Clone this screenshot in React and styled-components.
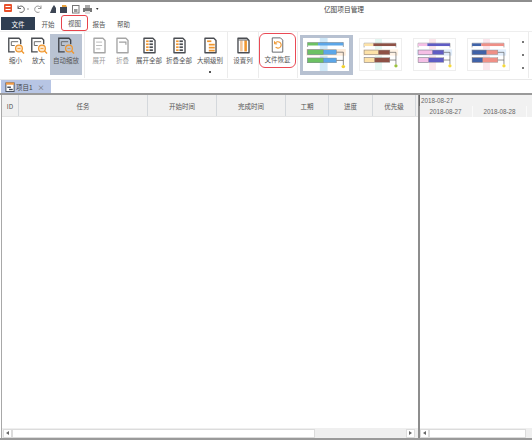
import React from "react";
import styled, { createGlobalStyle } from "styled-components";

const Global = createGlobalStyle`
html, body { margin:0; padding:0; background:#fff; }
body { font-family:"Noto Sans CJK SC","Liberation Sans",sans-serif; color:#555; }
`;

const Page = styled.div`
width:532px;
height:440px;
display:flex;
flex-direction:column;
overflow:hidden;
border-top:2px solid #8e8e8e;
box-sizing:border-box;
`;

const TitleBar = styled.div`
height:14px;
display:flex;
align-items:center;
position:relative;
`;

const Title = styled.div`
position:absolute;
left:0;
right:0;
top:0;
text-align:center;
font-size:6.7px;
line-height:14px;
color:#444;
padding-left:156px;
box-sizing:border-box;
`;

const MenuBar = styled.div`
height:15px;
display:flex;
align-items:flex-start;
padding-left:1px;
`;

const FileTab = styled.div`
width:34px;
background:#2f3e52;
color:#fff;
font-size:6.5px;
display:flex;
align-items:center;
justify-content:center;
height:13px;
margin-top:1px;
`;

const MenuTab = styled.div`
width:${(p) => p.$w || 26}px;
font-size:6.5px;
display:flex;
align-items:center;
justify-content:center;
color:#555;
box-sizing:border-box;
height:${(p) => (p.$ring ? 16 : 14)}px;
margin-top:${(p) => (p.$ring ? -1 : 1)}px;
border:${(p) => (p.$ring ? "1px solid #e8434b" : "none")};
border-radius:3px;
margin-left:${(p) => p.$ml || 0}px;
background:#fff;
`;

const Ribbon = styled.div`
height:49px;
display:flex;
align-items:flex-start;
border-top:1px solid #eeeeee;
border-bottom:1px solid #e9e9e9;
box-sizing:border-box;
padding-left:4px;
`;

const ToolButton = styled.div`
width:${(p) => p.$w}px;
height:${(p) => (p.$ring ? 35 : 41)}px;
margin-top:${(p) => (p.$ring ? 1 : 2)}px;
display:flex;
flex-direction:column;
align-items:center;
flex-shrink:0;
box-sizing:border-box;
padding-top:3px;
background:${(p) => (p.$active ? "#b9c3d3" : "transparent")};
border:${(p) => (p.$ring ? "1px solid #ea4a55" : "none")};
border-radius:${(p) => (p.$ring ? "6px" : "0")};
font-size:6.5px;
line-height:10px;
color:${(p) => (p.$off ? "#999" : "#555")};
white-space:nowrap;
position:relative;
`;

const ToolLabel = styled.span`
margin-top:1px;
`;

const Caret = styled.span`
position:absolute;
bottom:2px;
left:50%;
margin-left:-1px;
width:2px;
height:2px;
background:#555;
`;

const Sep = styled.div`
width:1px;
height:46px;
background:#ececec;
flex-shrink:0;
margin:${(p) => p.$m || "0 2px"};
`;

const Gallery = styled.div`
display:flex;
align-items:flex-start;
margin-top:3px;
`;

const Thumb = styled.div`
width:${(p) => (p.$sel ? 53 : 43)}px;
height:${(p) => (p.$sel ? 40 : 33)}px;
margin:${(p) => (p.$sel ? "0 6px 0 0" : "3px 11px 0 0")};
box-sizing:border-box;
border:${(p) => (p.$sel ? "solid #b7c1d1" : "1px solid #eeeeee")};
border-width:${(p) => (p.$sel ? "3px 4px 4px 3px" : "1px")};
display:flex;
flex-shrink:0;
`;

const GalleryDots = styled.div`
width:6px;
height:28px;
margin:6px 0 0 -1px;
display:flex;
flex-direction:column;
justify-content:space-between;
align-items:center;
`;

const Dot = styled.span`
width:2px;
height:2px;
background:#777;
`;

const TabRow = styled.div`
height:13px;
display:flex;
padding-left:1px;
`;

const DocTab = styled.div`
width:50px;
height:13px;
background:#b7c5e4;
display:flex;
align-items:center;
padding-left:4px;
gap:1px;
box-sizing:border-box;
font-size:6.5px;
color:#444;
`;

const Close = styled.span`
margin-left:4px;
font-size:7px;
color:#666;
`;

const Panels = styled.div`
flex:1;
display:flex;
min-height:0;
border-top:2px solid #9a9a9a;
border-bottom:2px solid #9a9a9a;
`;

const LeftPanel = styled.div`
width:417px;
margin-left:1px;
border-left:1px solid #a8a8a8;
display:flex;
flex-direction:column;
box-sizing:border-box;
`;

const HeadRow = styled.div`
height:22px;
display:flex;
background:#f0f0f0;
border-bottom:1px solid #e3e3e3;
box-sizing:border-box;
`;

const HeadCell = styled.div`
width:${(p) => p.$w}px;
flex-shrink:0;
font-size:6.5px;
display:flex;
align-items:center;
justify-content:center;
border-right:1px solid #d4d8dc;
box-sizing:border-box;
color:#555;
`;

const Body = styled.div`
flex:1;
background:#fff;
`;

const ScrollRow = styled.div`
height:10px;
display:flex;
align-items:center;
background:#efefef;
padding-left:${(p) => p.$pl || 0}px;
`;

const ScrollBtn = styled.div`
width:9px;
height:9px;
background:#fff;
border:1px solid #dcdcdc;
box-sizing:border-box;
display:flex;
align-items:center;
justify-content:center;
margin-left:${(p) => (p.$auto ? "auto" : "0")};
margin-right:${(p) => p.$mr || 0}px;
flex-shrink:0;
`;

const Arrow = styled.span`
width:0;
height:0;
border-top:2px solid transparent;
border-bottom:2px solid transparent;
border-${(p) => (p.$right ? "left" : "right")}:3px solid #666;
`;

const Thumbbar = styled.div`
width:${(p) => p.$w}px;
height:9px;
background:#fff;
border:1px solid #dcdcdc;
box-sizing:border-box;
`;

const Splitter = styled.div`
width:2px;
background:#8d8d8d;
flex-shrink:0;
`;

const RightPanel = styled.div`
flex:1;
display:flex;
flex-direction:column;
min-width:0;
`;

const GanttHead = styled.div`
height:22px;
background:#f1f1f1;
display:flex;
flex-direction:column;
font-size:6.3px;
line-height:11px;
color:#666;
font-family:"Liberation Sans",sans-serif;
`;

const GanttMonth = styled.div`
height:11px;
border-left:1px solid #666;
margin-left:-1px;
padding-left:1px;
position:relative;
`;

const GanttDays = styled.div`
height:11px;
display:flex;
margin-left:-1px;
`;

const GanttDay = styled.div`
width:54px;
text-align:center;
border-right:1px solid #fafafa;
box-sizing:border-box;
flex-shrink:0;
`;

const dark = "#4a4d52";
const org = "#f0962e";

// ribbon icons share one page shape, 20 units drawn at 17px
const Doc = ({ children, faded }) => (
  <svg width="17" height="17" viewBox="0 0 20 20" fill="none">
    <path
      d="M3.5 1.5h10.5l2.5 2.5v14.5h-13z"
      fill="#fff"
      stroke={faded ? "#a5a5a5" : dark}
      strokeWidth="1.6"
      strokeLinejoin="round"
    />
    {children}
  </svg>
);

const MagnifyIcon = ({ active }) => (
  <svg width="18" height="17" viewBox="0 0 21 20" fill="none">
    <path d="M9 17.5H2V1.5h12l2 2v5" stroke={active ? "#3f434a" : dark} strokeWidth="1.6" />
    <path d="M5 5.5h8M5 5.5v4.5h4" stroke="#666" strokeWidth="1.1" />
    <circle cx="14" cy="13.5" r="4" fill={active ? "none" : "#fde6c8"} stroke={org} strokeWidth="1.4" />
    <path d="M17 16.5l3 3" stroke={org} strokeWidth="1.5" />
    <path d="M12.3 13.5h3.4" stroke={org} strokeWidth="1" />
  </svg>
);

const OutlineIcon = ({ rows }) => (
  <Doc>
    {rows.map(([x, y, w, c]) => (
      <rect key={`${x}-${y}`} x={x} y={y} width={w} height="2" fill={c} />
    ))}
  </Doc>
);

const RestoreIcon = () => (
  <svg width="15" height="16" viewBox="0 0 20 21" fill="none">
    <path d="M3 1h11l3 3v16H3z" fill="#fff" stroke="#5a5d62" strokeWidth="1.2" />
    <path d="M6.8 8.4a4.3 4.3 0 1 1 .7 5" stroke={org} strokeWidth="1.5" />
    <path d="M6 5.5v3.5h3.5" stroke={org} strokeWidth="1.3" />
  </svg>
);

const ColumnsIcon = () => (
  <Doc>
    <rect x="6" y="4" width="3" height="13" fill="#f3c69a" />
    <rect x="11" y="4" width="3" height="13" fill={org} />
    <path d="M4 3.5h12" stroke={dark} />
  </Doc>
);

const QuickBar = () => (
  <svg width="100" height="14" viewBox="0 0 100 14" fill="none">
    <rect x="4" y="2" width="8" height="8" rx="1" fill="#e8502a" />
    <path d="M5.5 4.5h5M5.5 7.5h5" stroke="#fff" strokeWidth="1" />
    <path d="M18 6.5a3.2 3.2 0 1 1 1.5 3.5M18 3.5v3h3" stroke="#666" strokeWidth="1" />
    <path d="M27 7h2" stroke="#999" />
    <path d="M41 6.5a3.2 3.2 0 1 0-1.5 3.5M41 3.5v3h-3" stroke="#999" strokeWidth="1" />
    <path d="M50 11l2-5 2-3 2 3v5z" fill="#3d4654" />
    <path d="M60 5h7v6h-7z" fill="#3d4654" />
    <path d="M62 3h4l1 2h-5z" fill="#e9a33f" />
    <rect x="72.5" y="3.5" width="6.5" height="7.5" stroke="#777" />
    <rect x="74" y="7" width="3.5" height="3" fill="#999" />
    <rect x="83" y="6" width="9" height="4" fill="#777" />
    <rect x="85" y="3" width="5" height="3" fill="#aaa" />
    <rect x="85" y="9" width="5" height="3" fill="#ddd" />
    <path d="M96 6h2.5l-1.2 2z" fill="#333" />
  </svg>
);

const GanttThumb = ({ pre, post, band, stripe, dot, mid1, mid2, top }) => (
  <svg width="100%" height="100%" viewBox="0 0 43 33" preserveAspectRatio="none">
    <rect x="15.7" y="0" width="7.3" height="33" fill={stripe} />
    <rect x="3" y="11" width="37" height="6.7" fill={band} />
    <path d="M4.3 9V4.5h33.4V9" stroke="#555" strokeWidth="0.5" fill="none" />
    <rect x="4.3" y="4.7" width={top - 4.3} height="2.8" fill={pre} />
    <rect x={top} y="4.7" width={37.7 - top} height="2.8" fill={post} />
    <rect x="4.3" y="11.8" width="27" height="4.8" fill={post} stroke="#888" strokeWidth="0.4" />
    <rect x="4.3" y="11.8" width={mid1 - 4.3} height="4.8" fill={pre} stroke="#888" strokeWidth="0.4" />
    <rect x="4.3" y="20" width="27" height="4.8" fill={post} stroke="#888" strokeWidth="0.4" />
    <rect x="4.3" y="20" width={mid2 - 4.3} height="4.8" fill={pre} stroke="#888" strokeWidth="0.4" />
    <path d="M31.3 14.2h6.4v13M31.3 22.4h6.4" stroke="#444" strokeWidth="0.6" fill="none" />
    <circle cx="37.7" cy="28.6" r="1.7" fill={dot} />
  </svg>
);

const thumbs = [
  { pre: "#fde2a8", post: "#8e5145", band: "#fff3e6", stripe: "#e4f7f2", dot: "#9ac23c", top: 14, mid1: 19.3, mid2: 15.3 },
  { pre: "#f5bfe6", post: "#5f5cc4", band: "#e1edfb", stripe: "#fbe6ec", dot: "#f6d93a", top: 14, mid1: 19.3, mid2: 15.3 },
  { pre: "#3f62a8", post: "#ef8f86", band: "#e1edfb", stripe: "#fbe6ec", dot: "#f6d93a", top: 14, mid1: 19.3, mid2: 15.3 },
];

const columns = [
  ["ID", 17],
  ["任务", 129],
  ["开始时间", 69],
  ["完成时间", 69],
  ["工期", 43],
  ["进度", 44],
  ["优先级", 43],
];

const allRows = [
  [6, 4, 3, org], [10, 4, 4, dark],
  [6, 7.5, 3, org], [10, 7.5, 4, dark],
  [6, 11, 3, org], [10, 11, 4, dark],
  [6, 14.5, 3, org], [10, 14.5, 4, dark],
];

const App = () => {
  return (
    <Page>
      <Global />
      <TitleBar>
        <QuickBar />
        <Title>亿图项目管理</Title>
      </TitleBar>

      <MenuBar>
        <FileTab>文件</FileTab>
        <MenuTab $w={26}>开始</MenuTab>
        <MenuTab $w={27} $ring>视图</MenuTab>
        <MenuTab $w={20} $ml={1}>报告</MenuTab>
        <MenuTab $w={29}>帮助</MenuTab>
      </MenuBar>

      <Ribbon>
        <ToolButton $w={23}><MagnifyIcon /><ToolLabel>缩小</ToolLabel></ToolButton>
        <ToolButton $w={23}><MagnifyIcon /><ToolLabel>放大</ToolLabel></ToolButton>
        <ToolButton $w={32} $active><MagnifyIcon active /><ToolLabel>自动缩放</ToolLabel></ToolButton>
        <Sep $m="0 2px" />
        <ToolButton $w={24} $off>
          <Doc faded><path d="M6 6h7M6 10h7M6 14h5" stroke="#b0b0b0" /></Doc>
          <ToolLabel>展开</ToolLabel>
        </ToolButton>
        <ToolButton $w={23} $off>
          <Doc faded><path d="M6 6h8v3" stroke="#a0a0a0" strokeWidth="1.4" /></Doc>
          <ToolLabel>折叠</ToolLabel>
        </ToolButton>
        <ToolButton $w={30}>
          <OutlineIcon rows={allRows} />
          <ToolLabel>展开全部</ToolLabel>
        </ToolButton>
        <ToolButton $w={30}>
          <OutlineIcon rows={allRows} />
          <ToolLabel>折叠全部</ToolLabel>
        </ToolButton>
        <ToolButton $w={32}>
          <OutlineIcon rows={[[6, 4, 5, org], [8, 8, 7, org], [8, 11.5, 7, org], [8, 15, 7, org]]} />
          <ToolLabel>大纲级别</ToolLabel>
          <Caret />
        </ToolButton>
        <Sep $m="0 1px" />
        <ToolButton $w={28}><ColumnsIcon /><ToolLabel>设置列</ToolLabel></ToolButton>
        <Sep $m="0 0 0 1px" />
        <ToolButton $w={37} $ring><RestoreIcon /><ToolLabel>文件恢复</ToolLabel></ToolButton>
        <Sep $m="0 2px 0 1px" />
        <Gallery>
          <Thumb $sel>
            <GanttThumb pre="#6cc163" post="#5ba6e8" band="#fdebd9" stripe="#cfe8f8" dot="#f2d22e" top={14} mid1={19} mid2={19} />
          </Thumb>
          {thumbs.map((t) => (
            <Thumb key={t.pre}><GanttThumb {...t} /></Thumb>
          ))}
          <GalleryDots><Dot /><Dot /><Dot /></GalleryDots>
        </Gallery>
        <Sep $m="0 0 0 2px" />
      </Ribbon>

      <TabRow>
        <DocTab>
          <svg width="10" height="10" viewBox="0 0 10 11">
            <rect x="0.5" y="1" width="9" height="9.5" fill="#fff" stroke="#3d4654" />
            <rect x="0.5" y="0.5" width="9" height="2.5" fill="#ef9a45" />
            <rect x="2" y="5" width="4" height="1.5" fill="#3d4654" />
            <rect x="4" y="7.5" width="4" height="1.5" fill="#3d4654" />
          </svg>
          项目1
          <Close>×</Close>
        </DocTab>
      </TabRow>

      <Panels>
        <LeftPanel>
          <HeadRow>
            {columns.map(([name, w]) => (
              <HeadCell key={name} $w={w}>{name}</HeadCell>
            ))}
          </HeadRow>
          <Body />
          <ScrollRow $pl={1}>
            <ScrollBtn><Arrow /></ScrollBtn>
            <Thumbbar $w={303} />
            <ScrollBtn $auto $mr={3}><Arrow $right /></ScrollBtn>
          </ScrollRow>
        </LeftPanel>
        <Splitter />
        <RightPanel>
          <GanttHead>
            <GanttMonth>2018-08-27</GanttMonth>
            <GanttDays>
              <GanttDay>2018-08-27</GanttDay>
              <GanttDay>2018-08-28</GanttDay>
              <GanttDay />
            </GanttDays>
          </GanttHead>
          <Body />
          <ScrollRow>
            <ScrollBtn><Arrow /></ScrollBtn>
            <Thumbbar $w={97} />
          </ScrollRow>
        </RightPanel>
      </Panels>
    </Page>
  );
};

export default App;
